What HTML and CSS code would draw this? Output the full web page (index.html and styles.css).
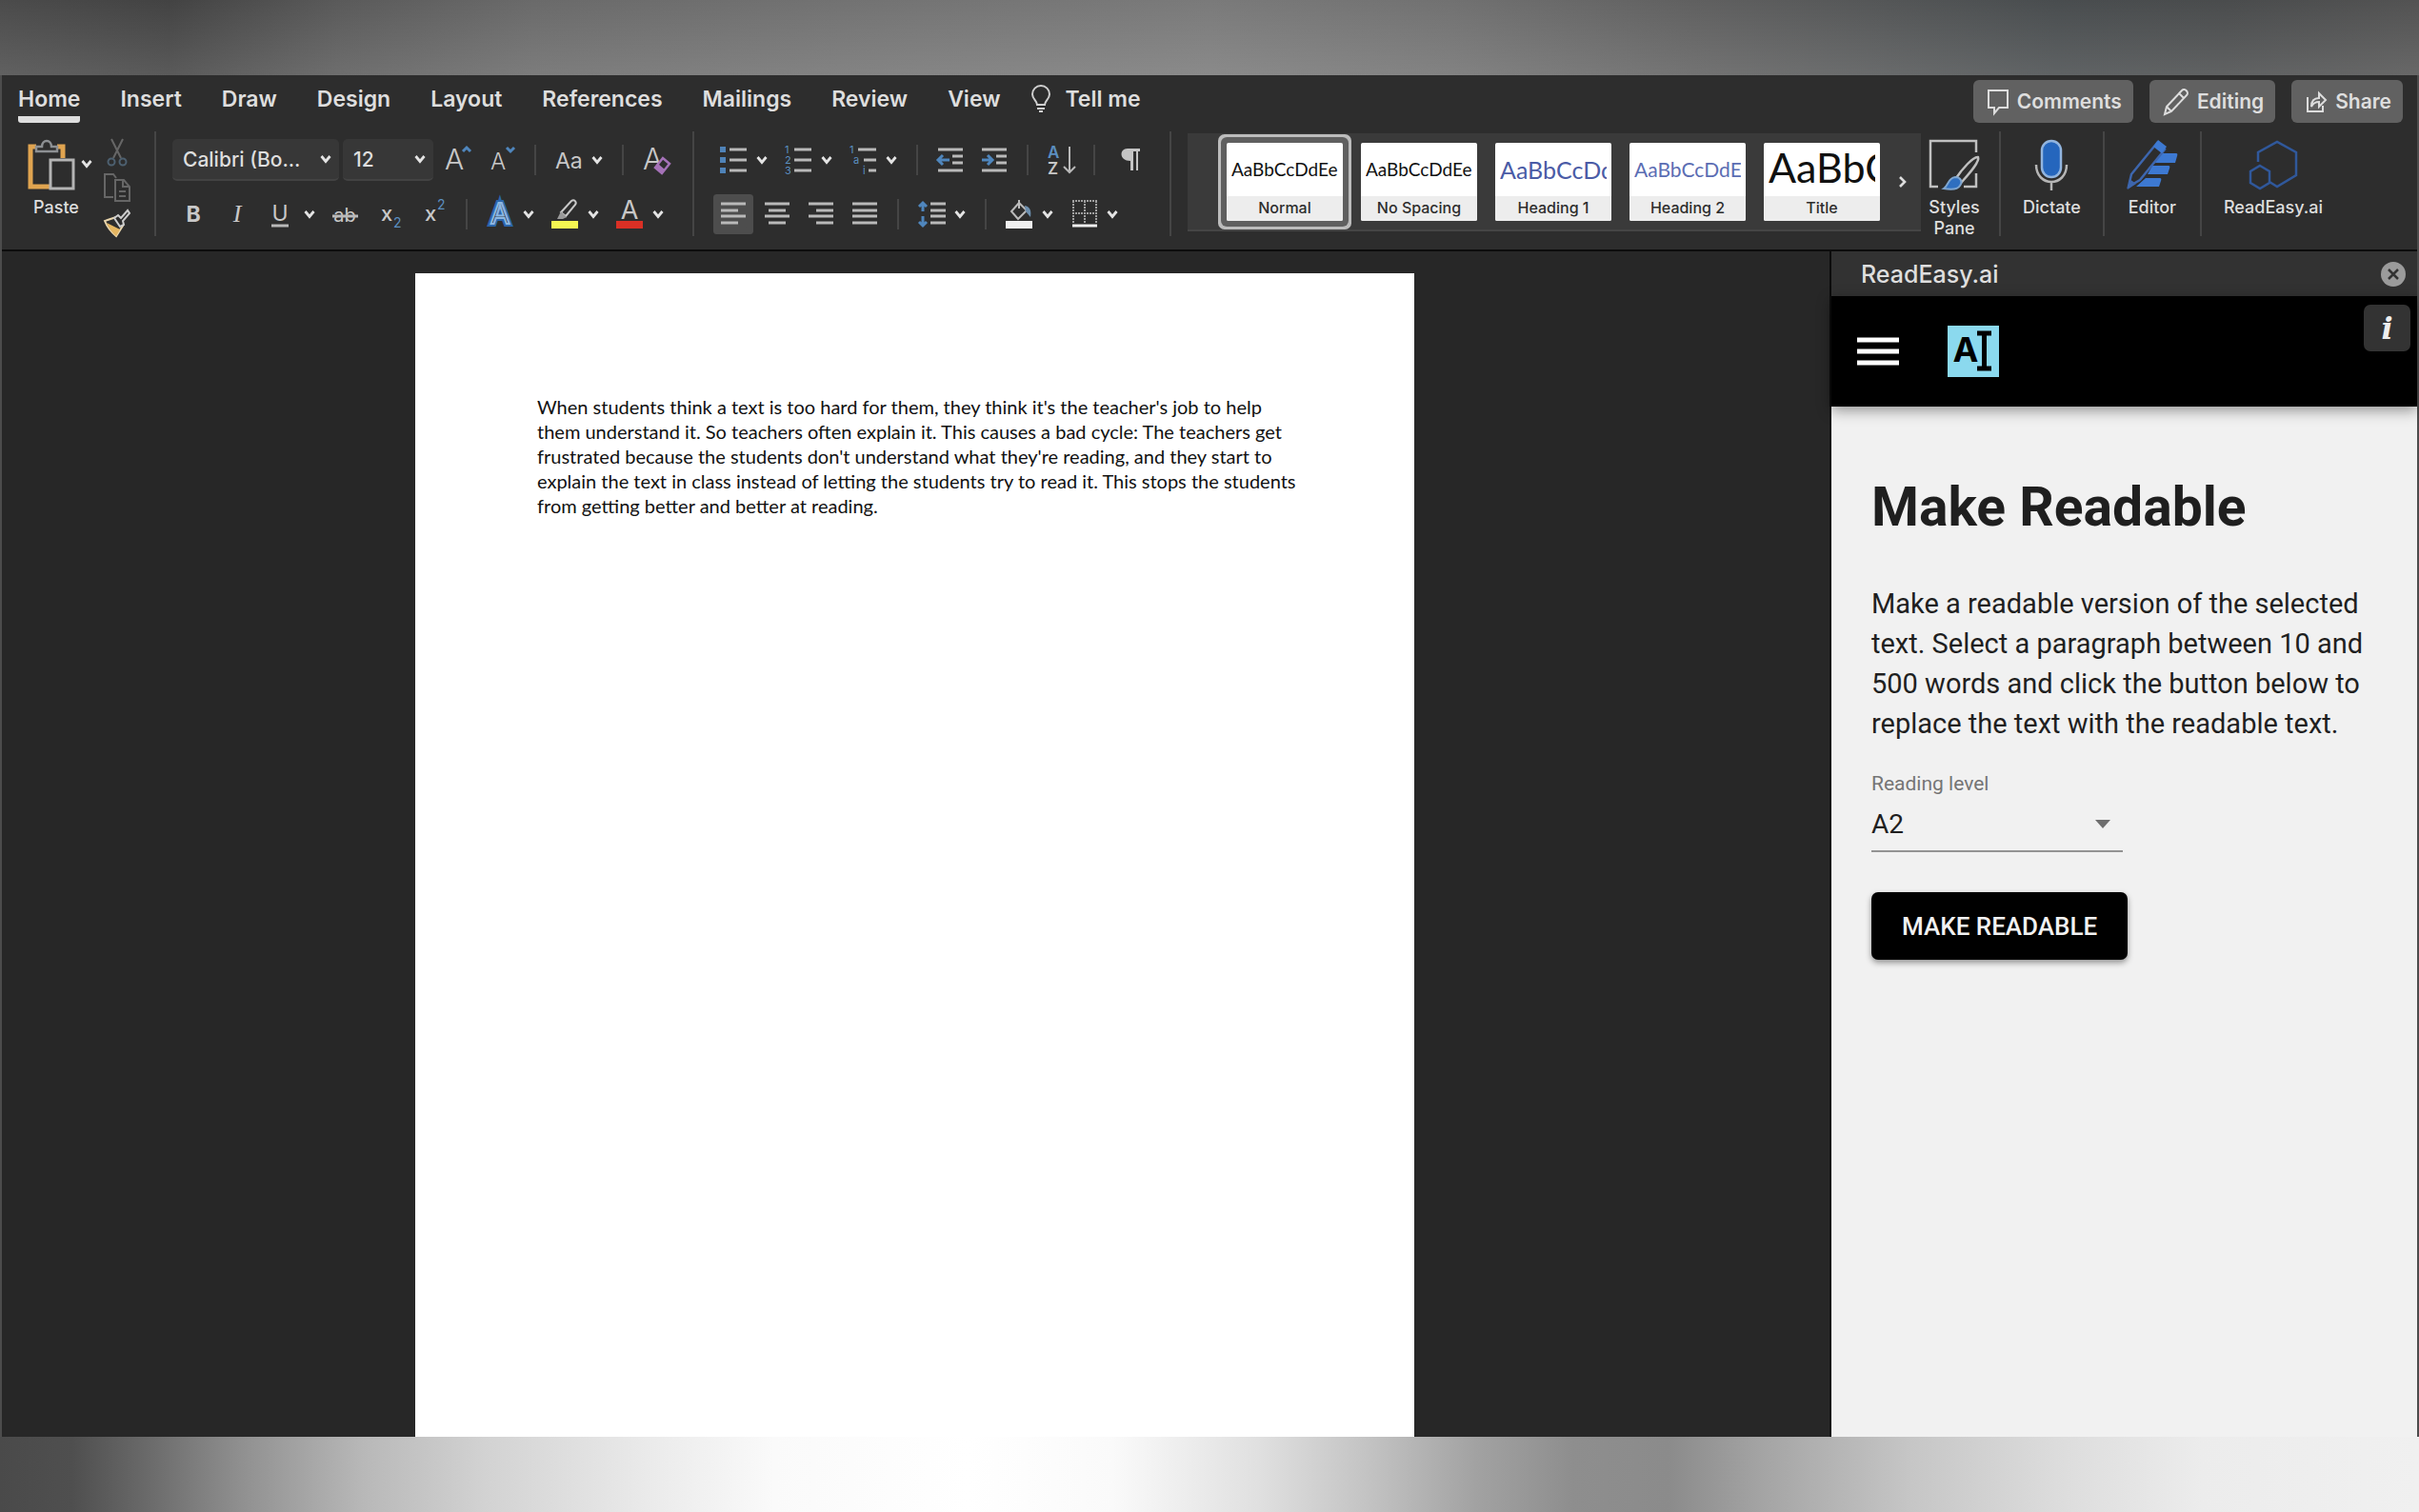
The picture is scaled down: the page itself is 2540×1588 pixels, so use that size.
FILE: index.html
```
<!DOCTYPE html>
<html lang="en">
  <head>
    <title>ReadEasy.ai</title>
    <meta charset="utf-8">
    <meta name="viewport" content="width=device-width, initial-scale=1">
    <link rel="stylesheet" href="styles.css">
  </head>
  <body>
    <svg class="defs" aria-hidden="true">
      <symbol id="caret" viewBox="0 0 12 10"><path d="M1.500 2l4.500 5.500L10.500 2" fill="none" stroke="#e4e4e4" stroke-width="2.800"/></symbol>
    </svg>
    <div class="band band-top"></div>
    <div class="window">
      <header class="topbar">
        <nav class="tabs">
          <a href="#" class="active">Home</a>
          <a href="#">Insert</a>
          <a href="#">Draw</a>
          <a href="#">Design</a>
          <a href="#">Layout</a>
          <a href="#">References</a>
          <a href="#">Mailings</a>
          <a href="#">Review</a>
          <a href="#">View</a>
          <a href="#" class="tell-me">
            <svg width="22" height="30" viewBox="0 0 22 30" fill="none" stroke="#cfcfcf" stroke-width="2"><path d="M7 21c0-4-5-6-5-11a9 9 0 0 1 18 0c0 5-5 7-5 11z"/><path d="M7 25h8M9 28h4"/></svg>
            Tell me
          </a>
        </nav>
        <div class="actions">
          <button>
            <svg width="24" height="28" viewBox="0 0 24 28" fill="none" stroke="#ddd" stroke-width="2"><path d="M2 2h20v18H13l-5 6v-6H2z"/></svg>
            Comments
          </button>
          <button>
            <svg width="28" height="30" viewBox="0 0 28 30" fill="none" stroke="#ddd" stroke-width="2"><path d="M2 28l2-8L20 3c3-3 8 2 5 5L9 25zM17 6l5 5M4 20l5 5"/></svg>
            Editing
          </button>
          <button>
            <svg width="24" height="24" viewBox="0 0 24 24" fill="none" stroke="#ddd" stroke-width="2"><path d="M3 7v15h16v-6"/><path d="M7 17c0-6 3-9 8-9V3l7 7-7 7v-5c-4 0-6 1-8 5z"/></svg>
            Share
          </button>
        </div>
      </header>

      <div class="ribbon">
        <div class="group paste-group">
          <button class="big paste">
            <svg width="50" height="54" viewBox="0 0 50 54" fill="none">
              <path d="M9 8H3v42h20M31 8h6v12" stroke="#e0a450" stroke-width="5"/>
              <path d="M9 13V8h6c0-8 10-8 10 0h6v5z" stroke="#8d9093" stroke-width="2.500" fill="#2d2d2d"/>
              <path d="M24 22h24v30H24z" fill="#2d2d2d" stroke="#b4b4b4" stroke-width="3"/>
            </svg>
            <span>Paste</span>
          </button>
          <button class="drop" title="Paste options"><svg><use href="#caret"/></svg></button>
          <div class="clip">
            <button title="Cut"><svg width="28" height="30" viewBox="0 0 28 30" fill="none" stroke-width="2"><path d="M8 1l10 20M20 1L10 21" stroke="#666"/><circle cx="8" cy="25" r="3.500" stroke="#4d6070"/><circle cx="20" cy="25" r="3.500" stroke="#4d6070"/></svg></button>
            <button title="Copy"><svg width="28" height="30" viewBox="0 0 28 30" fill="none" stroke="#666" stroke-width="2"><path d="M10 25H1V1h9l3 4M12 7h9l6 7v15H12zM20 7v7h7M16 19h7M16 24h7"/></svg></button>
            <button title="Format painter"><svg width="28" height="30" viewBox="0 0 28 30"><path d="M4 12l9-3 7 9-7 11C8 25 3 18 1 13z" fill="#2d2d2d" stroke="#ead7ae" stroke-width="2"/><path d="M3 15l14 7-4 7C9 26 5 20 3 15z" fill="#e5b661"/><path d="M11 10l4-3 3 3 7-8 2 3-7 8 1 4-4 2z" fill="#2d2d2d" stroke="#ccc" stroke-width="2"/></svg></button>
          </div>
        </div>

        <div class="group tools">
          <div class="row">
            <div class="font-box">
              <div class="combos">
                <div class="combo combo-font">
                  <select aria-label="Font"><option>Calibri (Bo...</option></select>
                  <svg><use href="#caret"/></svg>
                </div>
                <div class="combo combo-size">
                  <select aria-label="Font size"><option>12</option></select>
                  <svg><use href="#caret"/></svg>
                </div>
              </div>
              <button class="tool" title="Increase font size"><svg viewBox="0 0 28 40"><text x="0" y="30" font-size="30" class="thin">A</text><path class="blue" d="M19 11l4-4 4 4"/></svg></button>
            </div>
            <button class="tool" title="Decrease font size"><svg viewBox="0 0 28 40"><text x="2" y="30" font-size="24" class="thin">A</text><path class="blue" d="M19 7l4 4 4-4"/></svg></button>
            <i class="sep"></i>
            <div class="split">
              <button class="tool" title="Change case"><svg viewBox="0 0 28 40"><text x="0" y="29" font-size="23">Aa</text></svg></button>
              <button class="drop" title="Case options"><svg><use href="#caret"/></svg></button>
            </div>
            <i class="sep"></i>
            <button class="tool" title="Clear formatting"><svg viewBox="0 0 28 40"><text x="0" y="30" font-size="31" class="thin">A</text><path d="M13 28l8-10 7 6-8 10z" fill="#2d2d2d" stroke="#a572b8" stroke-width="2.500"/><path d="M13 28l3-4 7 6-3 4z" fill="#a572b8"/></svg></button>
          </div>
          <div class="row row-indent">
            <button class="tool" title="Bold"><svg viewBox="0 0 28 40"><text x="14" y="28" font-size="23" font-weight="700" text-anchor="middle">B</text></svg></button>
            <button class="tool" title="Italic"><svg viewBox="0 0 28 40"><text x="14" y="28" font-size="26" class="serif" font-style="italic" text-anchor="middle">I</text></svg></button>
            <div class="split">
              <button class="tool" title="Underline"><svg viewBox="0 0 28 40"><text x="13" y="27" font-size="23" text-anchor="middle">U</text><path class="line" d="M4 32h18"/></svg></button>
              <button class="drop" title="Underline options"><svg><use href="#caret"/></svg></button>
            </div>
            <button class="tool" title="Strikethrough"><svg viewBox="0 0 28 40"><text x="13" y="28" font-size="20" text-anchor="middle">ab</text><path class="line" d="M0 22h27"/></svg></button>
            <button class="tool" title="Subscript"><svg viewBox="0 0 28 40"><text x="5" y="27" font-size="22" font-weight="500">x</text><text x="18" y="34" font-size="14" class="blue-text">2</text></svg></button>
            <button class="tool" title="Superscript"><svg viewBox="0 0 28 40"><text x="5" y="27" font-size="22" font-weight="500">x</text><text x="18" y="15" font-size="14" class="blue-text">2</text></svg></button>
            <i class="sep"></i>
            <div class="split">
              <button class="tool" title="Text effects"><svg viewBox="0 0 28 40"><text x="14" y="30" font-size="30" text-anchor="middle" class="glow">A</text><text x="14" y="30" font-size="30" text-anchor="middle" class="outline">A</text></svg></button>
              <button class="drop" title="Effect options"><svg><use href="#caret"/></svg></button>
            </div>
            <div class="split">
              <button class="tool" title="Highlight"><svg viewBox="0 0 28 40"><path d="M10 18L21 6c3-2 6 1 4 4L15 22z" fill="none" stroke="#c8c8c8" stroke-width="2"/><path d="M10 17l6 6-4 2-6 0z" fill="#999"/><path d="M0 27h28v8H0z" fill="#f5f652"/></svg></button>
              <button class="drop" title="Highlight colors"><svg><use href="#caret"/></svg></button>
            </div>
            <div class="split">
              <button class="tool" title="Font color"><svg viewBox="0 0 28 40"><text x="14" y="25" font-size="27" text-anchor="middle">A</text><path d="M0 27h28v8H0z" fill="#d93025"/></svg></button>
              <button class="drop" title="Font colors"><svg><use href="#caret"/></svg></button>
            </div>
          </div>
        </div>

        <div class="group tools">
          <div class="row">
            <div class="split">
              <button class="tool" title="Bullets"><svg viewBox="0 0 28 40"><path d="M0 6h6v6H0zM0 17h6v6H0zM0 28h6v6H0z" fill="#4f83b8"/><path class="line" d="M10 9h18M10 20h18M10 31h18"/></svg></button>
              <button class="drop" title="Bullet styles"><svg><use href="#caret"/></svg></button>
            </div>
            <div class="split">
              <button class="tool" title="Numbering"><svg viewBox="0 0 28 40"><text x="0" y="13" font-size="11" class="blue-text">1</text><text x="0" y="24" font-size="11" class="blue-text">2</text><text x="0" y="35" font-size="11" class="blue-text">3</text><path class="line" d="M10 9h18M10 20h18M10 31h18"/></svg></button>
              <button class="drop" title="Number styles"><svg><use href="#caret"/></svg></button>
            </div>
            <div class="split">
              <button class="tool" title="Multilevel list"><svg viewBox="0 0 28 40"><text x="0" y="13" font-size="11" class="blue-text">1</text><text x="4" y="24" font-size="11" class="blue-text">a</text><text x="14" y="35" font-size="11" class="blue-text">i</text><path class="line" d="M9 9h19M15 20h13M20 31h8"/></svg></button>
              <button class="drop" title="Multilevel styles"><svg><use href="#caret"/></svg></button>
            </div>
            <i class="sep"></i>
            <button class="tool" title="Decrease indent"><svg viewBox="0 0 28 40"><path class="line" d="M1 9h26M16 16h11M16 23h11M1 31h26"/><path class="blue" d="M13 20H2M6 15l-5 5 5 5"/></svg></button>
            <button class="tool" title="Increase indent"><svg viewBox="0 0 28 40"><path class="line" d="M1 9h26M16 16h11M16 23h11M1 31h26"/><path class="blue" d="M1 20h11M7 15l5 5-5 5"/></svg></button>
            <i class="sep"></i>
            <button class="tool" title="Sort"><svg viewBox="0 0 28 40"><text x="0" y="18" font-size="17" class="blue-text" font-weight="600">A</text><text x="0" y="35" font-size="17" font-weight="600">Z</text><path class="line thin-line" d="M23 6v27M17 27l6 6 6-6"/></svg></button>
            <i class="sep"></i>
            <button class="tool" title="Show marks"><svg viewBox="0 0 28 40"><path d="M14 8h13v3h-2v20h-2V11h-3v20h-3V21c-12 0-12-13-3-13z" fill="#c4c4c4"/></svg></button>
          </div>
          <div class="row">
            <button class="tool pressed" title="Align left"><svg viewBox="0 0 28 40"><path class="line" d="M1 9h26M1 16h18M1 22h26M1 29h18"/></svg></button>
            <button class="tool" title="Center"><svg viewBox="0 0 28 40"><path class="line" d="M1 9h26M5 16h18M1 22h26M5 29h18"/></svg></button>
            <button class="tool" title="Align right"><svg viewBox="0 0 28 40"><path class="line" d="M1 9h26M9 16h18M1 22h26M9 29h18"/></svg></button>
            <button class="tool" title="Justify"><svg viewBox="0 0 28 40"><path class="line" d="M1 9h26M1 16h26M1 22h26M1 29h26"/></svg></button>
            <i class="sep"></i>
            <div class="split">
              <button class="tool" title="Line spacing"><svg viewBox="0 0 28 40"><path class="line" d="M13 9h16M13 16h16M13 22h16M13 29h16"/><path class="blue" d="M5 9v8M5 22v9M1 12l4-4 4 4M1 28l4 4 4-4"/></svg></button>
              <button class="drop" title="Spacing options"><svg><use href="#caret"/></svg></button>
            </div>
            <i class="sep"></i>
            <div class="split">
              <button class="tool" title="Shading"><svg viewBox="0 0 28 40"><path d="M14 8l8 8-9 9-7-8zM14 5v9" fill="none" stroke="#bbb" stroke-width="2"/><path d="M20 11c6 1 7 6 6 12l-5-6z" fill="#6d8fae"/><path d="M0 27h28v8H0z" fill="#efefef"/></svg></button>
              <button class="drop" title="Shading colors"><svg><use href="#caret"/></svg></button>
            </div>
            <div class="split">
              <button class="tool" title="Borders"><svg viewBox="0 0 28 40"><path d="M2 6h26M2 19h26M3 6v24M15 6v24M27 6v24" fill="none" stroke="#a0a0a0" stroke-width="2" stroke-dasharray="2 1"/><path d="M2 32h26" stroke="#f0f0f0" stroke-width="3"/></svg></button>
              <button class="drop" title="Border options"><svg><use href="#caret"/></svg></button>
            </div>
          </div>
        </div>

        <div class="group gallery-group">
          <div class="gallery">
            <button class="style selected"><span class="sample">AaBbCcDdEe</span><span class="name">Normal</span></button>
            <button class="style"><span class="sample">AaBbCcDdEe</span><span class="name">No Spacing</span></button>
            <button class="style"><span class="sample heading-1">AaBbCcDdEe</span><span class="name">Heading 1</span></button>
            <button class="style"><span class="sample heading-2">AaBbCcDdEe</span><span class="name">Heading 2</span></button>
            <button class="style"><span class="sample title">AaBbCcDdEe</span><span class="name">Title</span></button>
            <button class="more" title="More styles"><svg width="10" height="14" viewBox="0 0 10 14"><path d="M2 2l5 5-5 5" fill="none" stroke="#ddd" stroke-width="2.600"/></svg></button>
          </div>
          <button class="big styles-pane">
            <svg width="54" height="54" viewBox="0 0 54 54" fill="none">
              <path d="M10 50H2V2h48v12M50 36v14H37" stroke="#c0c0c0" stroke-width="2.500"/>
              <path d="M52 19c2 5-10 18-17 26l-6-4c6-9 18-23 23-22z" fill="#2d2d2d" stroke="#c0c0c0" stroke-width="2.500"/>
              <path d="M28 40c6 0 8 5 5 9-3 5-11 4-17 3 5-3 4-11 12-12z" fill="#2f6fc0" stroke="#7fa6d0" stroke-width="2"/>
            </svg>
            <span>Styles<br>Pane</span>
          </button>
        </div>
        <div class="group">
          <button class="big">
            <svg width="36" height="54" viewBox="0 0 36 54" fill="none">
              <rect x="8" y="2" width="20" height="38" rx="10" fill="#2566bd" stroke="#92b5df" stroke-width="2.500"/>
              <path d="M2 27c0 24 32 24 32 0M18 45v9" stroke="#b5b5b5" stroke-width="2.500"/>
            </svg>
            Dictate
          </button>
        </div>
        <div class="group">
          <button class="big">
            <svg width="54" height="54" viewBox="0 0 54 54">
              <path d="M34 15h18q2 0 1 3l-2 7H28zM27 28h17q2 0 1 3l-2 6H22zM20 41h15q2 0 1 3l-2 6H10z" fill="#3d79d2"/>
              <path d="M2 50L5 37 32 4l8 7L14 43z" fill="#2d2d2d" stroke="#3d66ae" stroke-width="2.500"/>
              <path d="M33 1l9 7-5 7-9-7z" fill="#3d79d2"/><path d="M1 53l2-11 7 5z" fill="#3d66ae"/>
            </svg>
            Editor
          </button>
        </div>
        <div class="group">
          <button class="big">
            <svg width="52" height="54" viewBox="0 0 52 54" fill="none" stroke="#30589b" stroke-width="2.500">
              <path d="M10 24V14L30 3l20 11v24L30 50l-8-5"/>
              <path d="M12 28l10 6v12l-10 6-10-6V34z"/>
            </svg>
            ReadEasy.ai
          </button>
        </div>
      </div>

      <div class="workspace">
        <main class="canvas">
          <article class="page">
            <p>When students think a text is too hard for them, they think it's the teacher's job to help them understand it. So teachers often explain it. This causes a bad cycle: The teachers get frustrated because the students don't understand what they're reading, and they start to explain the text in class instead of letting the students try to read it. This stops the students from getting better and better at reading.</p>
          </article>
        </main>
        <aside class="panel">
          <div class="panel-title">
            ReadEasy.ai
            <button title="Close"><svg width="26" height="26" viewBox="0 0 26 26"><circle cx="13" cy="13" r="13" fill="#9b9b9b"/><path d="M8 8l10 10M18 8L8 18" stroke="#323232" stroke-width="2.500"/></svg></button>
          </div>
          <div class="app-bar">
            <button class="menu" title="Menu"><svg width="44" height="32" viewBox="0 0 44 32"><path d="M0 4h44M0 16h44M0 28h44" stroke="#fff" stroke-width="5"/></svg></button>
            <svg class="logo" width="54" height="54" viewBox="0 0 54 54">
              <path d="M0 0h54v54H0z" fill="#8bd9ee"/>
              <text x="19" y="38" text-anchor="middle" font-size="36" font-weight="700">A</text>
              <path d="M31 8h15M38.500 8v37M31 45h15" stroke="#000" stroke-width="5"/>
            </svg>
            <button class="info" title="Information">i</button>
          </div>
          <div class="panel-body">
            <h1>Make Readable</h1>
            <p>Make a readable version of the selected text. Select a paragraph between 10 and 500 words and click the button below to replace the text with the readable text.</p>
            <label for="level">Reading level</label>
            <div class="level">
              <select id="level"><option>A2</option></select>
              <svg width="16" height="9" viewBox="0 0 16 9"><path d="M0 0h16L8 9z" fill="#6e6e6e"/></svg>
            </div>
            <button class="submit">MAKE READABLE</button>
          </div>
        </aside>
      </div>
    </div>
    <div class="band band-bottom"></div>
  </body>
</html>
```

FILE: styles.css
```
* {
  box-sizing: border-box;
}
body {
  margin: 0;
  min-height: 100vh;
  display: flex;
  flex-direction: column;
  font-family: Inter, "Liberation Sans", sans-serif;
  color: #dedede;
}
button, select {
  font: inherit;
  color: inherit;
  background: none;
  border: 0;
  padding: 0;
  margin: 0;
}
svg {
  display: block;
  overflow: visible;
}
.defs {
  position: absolute;
  width: 0;
  height: 0;
}
.band {
  height: 79px;
}
.band-top {
  background:
    linear-gradient(rgba(255, 255, 255, 0), rgba(255, 255, 255, 0.12)),
    linear-gradient(90deg, #4b4b4b 0%, #434343 7%, #5a5a5a 14%, #6a6a6a 22%, #747474 38%, #7a7a7a 50%, #717171 60%, #606060 70%, #545657 78%, #494d4f 85%, #4a4c4d 92%, #535353 100%);
}
.band-bottom {
  background: linear-gradient(90deg, #4a4a4a 0%, #4f4f4f 3%, #696969 6%, #909090 10%, #b8b8b8 15%, #d2d2d2 20%, #ebebeb 27%, #fafafa 32%, #fff 40%, #fafafa 46%, #e0e0e0 52%, #c0c0c0 57%, #a2a2a2 61%, #8e8e8e 65%, #8b8b8b 69%, #a5a5a5 73%, #c6c6c6 79%, #dcdcdc 85%, #ececec 91%, #f0f0f0 100%);
}
.window {
  flex: 1;
  display: flex;
  flex-direction: column;
  border: solid #4c4c4c;
  border-width: 0 2px;
  background: #2d2d2d;
}

/* tabs */
.topbar {
  height: 59px;
  display: flex;
  justify-content: space-between;
  padding: 0 15px 0 17px;
}
.tabs {
  display: flex;
  gap: 42px;
  font-size: 23px;
  font-weight: 600;
}
.tabs a {
  color: #dedede;
  text-decoration: none;
  line-height: 50px;
  height: 50px;
  white-space: nowrap;
}
.tabs .active {
  border-bottom: 7px solid #dedede;
  border-radius: 3px;
}
.tabs .tell-me {
  display: flex;
  align-items: center;
  gap: 14px;
  margin-left: -10px;
}
.actions {
  display: flex;
  gap: 17px;
  padding-top: 5px;
}
.actions button {
  display: flex;
  align-items: center;
  gap: 8px;
  height: 45px;
  padding: 0 12px 0 14px;
  border-radius: 6px;
  background: #616161;
  font-size: 21px;
  font-weight: 600;
}

/* ribbon */
.ribbon {
  height: 126px;
  display: flex;
  align-items: flex-start;
  border-bottom: 2px solid #0c0c0c;
}
.group {
  height: 110px;
  display: flex;
  border-right: 2px solid #454545;
}
.group:last-child {
  border-right: 0;
}
.big {
  display: flex;
  flex-direction: column;
  align-items: center;
  gap: 7px;
  padding: 8px 23px 0;
  font-size: 18px;
  font-weight: 500;
  line-height: 22px;
}
.paste-group {
  width: 162px;
  padding-left: 27px;
}
.paste {
  align-items: flex-start;
  padding: 8px 0 0;
}
.paste span {
  padding-left: 6px;
}
.drop {
  width: 12px;
}
.drop svg,
.combo svg {
  width: 12px;
  height: 10px;
}
.paste-group .drop {
  height: 68px;
  margin-left: 2px;
}
.clip {
  display: flex;
  flex-direction: column;
  gap: 7px;
  padding: 7px 0 0 12px;
}
.tools {
  flex-direction: column;
  gap: 17px;
  padding: 10px 24px 0;
}
.group + .tools {
  padding-left: 17px;
}
.tools + .tools {
  padding: 10px 30px 0 27px;
}
.row {
  display: flex;
  align-items: center;
  gap: 18px;
  height: 40px;
}
.row-indent {
  padding-left: 8px;
}
.split {
  display: flex;
  align-items: center;
  gap: 10px;
}
.tool {
  width: 28px;
  height: 40px;
}
.tool svg {
  width: 28px;
  height: 40px;
}
.tool text {
  fill: #c8c8c8;
}
.tool .thin {
  font-weight: 300;
}
.tool .serif {
  font-family: "Liberation Serif", serif;
}
.tool .blue-text {
  fill: #5b8fc0;
}
.tool .glow {
  fill: none;
  stroke: #2b66ac;
  stroke-width: 6px;
}
.tool .outline {
  fill: #2d2d2d;
  stroke: #8bb6e2;
  stroke-width: 2px;
}
.tool .line {
  fill: none;
  stroke: #b9b9b9;
  stroke-width: 3px;
}
.tool .thin-line {
  stroke-width: 2px;
}
.tool .blue {
  fill: none;
  stroke: #4f86bd;
  stroke-width: 3px;
}
.pressed {
  background: #4d4d4d;
  box-shadow: 0 0 0 7px #4d4d4d;
  height: 28px;
  border-radius: 1px;
}
.pressed svg {
  margin-top: -6px;
}
.sep {
  width: 2px;
  height: 32px;
  margin: 0 2px;
  background: #454545;
}
.font-box {
  display: flex;
  align-items: center;
  gap: 12px;
}
.combos {
  display: flex;
  gap: 4px;
}
.combo {
  display: grid;
  align-items: center;
  height: 44px;
  border-radius: 5px;
  background: #373737;
  border-bottom: 2px solid #434343;
  font-size: 21px;
  font-weight: 500;
}
.combo-font {
  width: 175px;
}
.combo-size {
  width: 95px;
}
.combo select,
.combo svg {
  grid-area: 1 / 1;
}
.combo select {
  appearance: none;
  width: 100%;
  padding-left: 11px;
}
.combo svg {
  justify-self: end;
  margin-right: 8px;
  pointer-events: none;
}

/* style gallery */
.gallery-group {
  padding-left: 17px;
}
.gallery {
  display: flex;
  align-items: center;
  gap: 19px;
  height: 103px;
  margin-top: 2px;
  padding-left: 41px;
  background: #3a3a3a;
  border-bottom: 2px solid #454545;
}
.style {
  width: 122px;
  height: 82px;
  display: flex;
  flex-direction: column;
  background: #fff;
  border-radius: 2px;
  overflow: hidden;
  color: #111;
}
.selected {
  box-shadow: 0 0 0 6px #5f5f5f, 0 0 0 9px #bcbcbc;
}
.sample {
  width: 112px;
  height: 56px;
  margin-left: 5px;
  line-height: 56px;
  overflow: hidden;
  text-align: left;
  font-family: Lato, sans-serif;
  font-size: 19px;
}
.heading-1 {
  font-size: 25px;
  color: #4a5ba6;
}
.heading-2 {
  font-size: 21px;
  color: #5b6db3;
}
.title {
  font-size: 43px;
  line-height: 52px;
}
.name {
  width: 100%;
  height: 26px;
  line-height: 24px;
  background: #ededed;
  text-align: center;
  font-size: 16px;
  font-weight: 500;
  color: #2d2d2d;
}
.more {
  width: 24px;
  display: flex;
  align-self: stretch;
  align-items: center;
}
.styles-pane {
  padding: 8px 20px 0 8px;
}

/* document */
.workspace {
  flex: 1;
  display: flex;
}
.canvas {
  flex: 1;
  display: flex;
  justify-content: center;
  padding: 23px 22px 0 20px;
  background: #272727;
}
.page {
  width: 1049px;
  padding: 127px 112px 0 128px;
  background: #fff;
  color: #111;
  font-family: Lato, sans-serif;
  font-size: 20px;
  line-height: 26px;
}
.page p {
  margin: 0;
}

/* add-in panel */
.panel {
  width: 617px;
  border-left: 2px solid #0c0c0c;
  background: #f1f1f1;
  color: #1f1f1f;
  font-family: Roboto, sans-serif;
}
.panel-title {
  display: flex;
  align-items: center;
  justify-content: space-between;
  height: 47px;
  padding: 0 12px 0 31px;
  background: #323232;
  color: #dedede;
  font-family: Inter, sans-serif;
  font-size: 25px;
  font-weight: 500;
}
.app-bar {
  display: flex;
  align-items: center;
  height: 116px;
  padding: 0 7px 0 27px;
  background: #000;
  box-shadow: 0 4px 14px rgba(0, 0, 0, 0.4);
}
.logo {
  margin-left: 51px;
  font-family: Inter, sans-serif;
}
.info {
  align-self: flex-start;
  width: 49px;
  height: 49px;
  margin: 9px 0 0 auto;
  border-radius: 7px;
  background: #333;
  color: #eee;
  font-family: "DejaVu Serif", serif;
  font-size: 32px;
  font-weight: 700;
  font-style: italic;
}
.panel-body {
  padding: 70px 40px 0 42px;
}
.panel-body h1 {
  margin: 0;
  font-size: 57px;
  font-weight: 700;
  line-height: 72px;
}
.panel-body p {
  margin: 44px 0 30px;
  font-size: 29px;
  line-height: 42px;
}
.panel-body label {
  display: block;
  font-size: 21px;
  line-height: 24px;
  color: #757575;
}
.level {
  display: grid;
  align-items: center;
  width: 264px;
  height: 60px;
  padding-top: 2px;
  border-bottom: 2px solid #939393;
  font-size: 28px;
}
.level select,
.level svg {
  grid-area: 1 / 1;
}
.level select {
  appearance: none;
  width: 100%;
}
.level svg {
  justify-self: end;
  margin-right: 13px;
  pointer-events: none;
}
.submit {
  height: 71px;
  margin-top: 42px;
  padding: 0 32px;
  border-radius: 7px;
  background: #000;
  color: #f1f1f1;
  font-size: 26px;
  font-weight: 500;
  box-shadow: 0 3px 6px rgba(0, 0, 0, 0.4);
}
```
